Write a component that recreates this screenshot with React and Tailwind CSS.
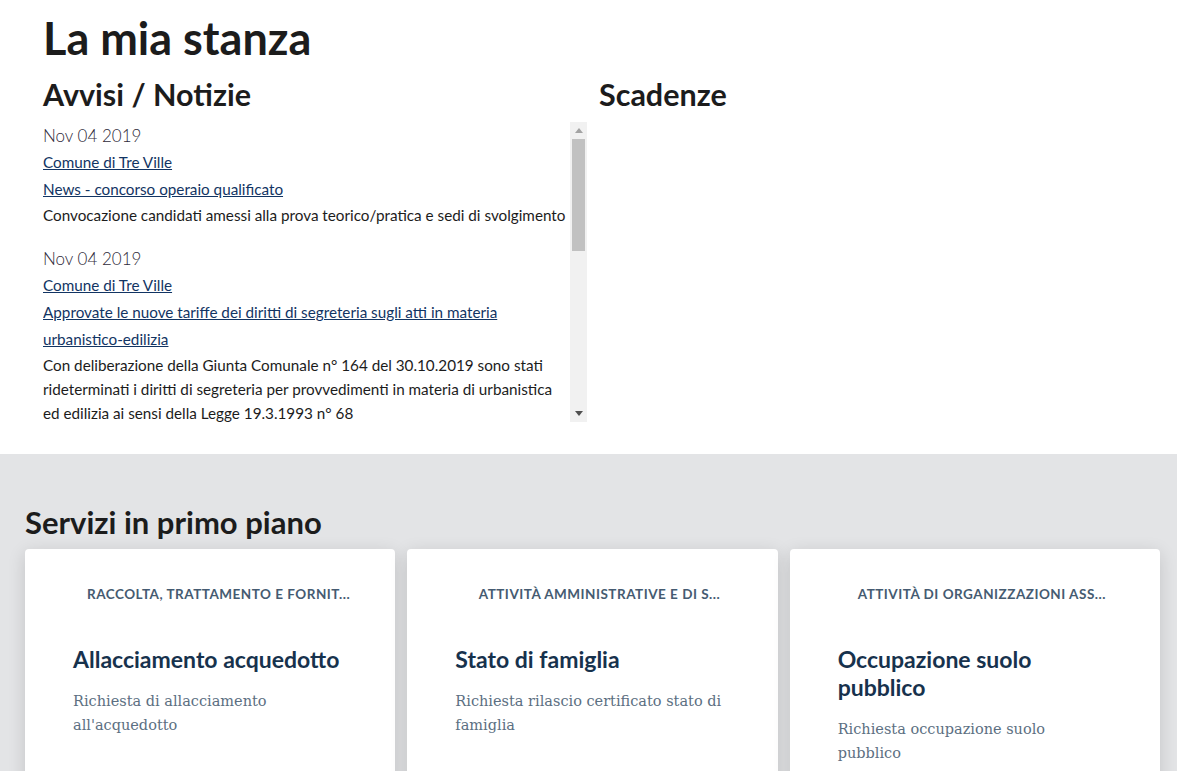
import React from 'react';

const sans = { fontFamily: 'Lato, "Noto Sans", sans-serif' };
const serif = { fontFamily: '"DejaVu Serif", "Liberation Serif", serif' };

const news = [
  {
    date: 'Nov 04 2019',
    source: 'Comune di Tre Ville',
    title: 'News - concorso operaio qualificato',
    text: 'Convocazione candidati amessi alla prova teorico/pratica e sedi di svolgimento',
  },
  {
    date: 'Nov 04 2019',
    source: 'Comune di Tre Ville',
    title: 'Approvate le nuove tariffe dei diritti di segreteria sugli atti in materia urbanistico-edilizia',
    text: 'Con deliberazione della Giunta Comunale n° 164 del 30.10.2019 sono stati rideterminati i diritti di segreteria per provvedimenti in materia di urbanistica ed edilizia ai sensi della Legge 19.3.1993 n° 68',
  },
];

const services = [
  {
    category: 'Raccolta, trattamento e fornit...',
    title: 'Allacciamento acquedotto',
    text: "Richiesta di allacciamento all'acquedotto",
  },
  {
    category: 'Attività amministrative e di s...',
    title: 'Stato di famiglia',
    text: 'Richiesta rilascio certificato stato di famiglia',
  },
  {
    category: 'Attività di organizzazioni ass...',
    title: 'Occupazione suolo pubblico',
    text: 'Richiesta occupazione suolo pubblico',
  },
];

const NewsItem = ({ item }) => (
  <div className="mb-[18px] text-[15.25px] leading-[27px]">
    <div className="text-[17px] font-light text-[#2f2b3a]">{item.date}</div>
    <div>
      <a href="#" className="text-[#123463] underline">{item.source}</a>
    </div>
    <div>
      <a href="#" className="text-[#123463] underline">{item.title}</a>
    </div>
    <p className="leading-[24px] text-[#1c1c1c]">{item.text}</p>
  </div>
);

// fake classic scrollbar, the page's own scrollbars are hidden in the capture
const ScrollBar = () => (
  <div className="flex w-[17px] shrink-0 flex-col bg-[#f1f1f1]">
    <div className="flex h-[17px] items-center justify-center">
      <svg width="8" height="5" viewBox="0 0 8 5">
        <path d="M0 5 L4 0 L8 5 Z" fill="#a3a3a3" />
      </svg>
    </div>
    <div className="mx-[2px] h-[112px] bg-[#c1c1c1]" />
    <div className="flex-1" />
    <div className="flex h-[17px] items-center justify-center">
      <svg width="8" height="5" viewBox="0 0 8 5">
        <path d="M0 0 L8 0 L4 5 Z" fill="#505050" />
      </svg>
    </div>
  </div>
);

const ServiceCard = ({ service }) => (
  <div className="h-[260px] rounded-[4px] bg-white px-[48px] pt-[35px] shadow-[0_4px_18px_rgba(0,0,0,0.14)]">
    <div className="whitespace-nowrap pl-[14px] text-center text-[13.5px] font-bold uppercase tracking-[0.5px] text-[#455b71]">
      {service.category}
    </div>
    <h3 className="mt-[41px] text-[23px] font-bold leading-[28px] text-[#17324d]">{service.title}</h3>
    <p className="mt-[16px] text-[14.5px] leading-[24px] text-[#5c6f82]" style={serif}>
      {service.text}
    </p>
  </div>
);

export default function App() {
  return (
    <div className="min-h-[771px] bg-white" style={sans}>
      <section className="pl-[43px] pt-[10px] pb-[32px]">
        <h1 className="text-[45px] font-bold leading-[56px] text-[#1c1c1c]">La mia stanza</h1>
        <div className="mt-[8px] grid w-[1100px] grid-cols-2 gap-[12px]">
          <div>
            <h2 className="text-[30.5px] font-bold leading-[40px] text-[#1c1c1c]">Avvisi / Notizie</h2>
            <div className="mt-[8px] flex h-[300px]">
              <div className="flex-1 overflow-hidden">
                {news.map((item, i) => (
                  <NewsItem key={i} item={item} />
                ))}
              </div>
              <ScrollBar />
            </div>
          </div>
          <div>
            <h2 className="text-[30.5px] font-bold leading-[40px] text-[#1c1c1c]">Scadenze</h2>
          </div>
        </div>
      </section>

      <section className="bg-[#e3e4e6] pt-[48px] pb-[20px]">
        <div className="ml-[25px] w-[1135px]">
          <h2 className="text-[31px] font-bold leading-[40px] text-[#1c1c1c]">Servizi in primo piano</h2>
          <div className="mt-[7px] grid grid-cols-3 gap-[12px]">
            {services.map((s, i) => (
              <ServiceCard key={i} service={s} />
            ))}
          </div>
        </div>
      </section>
    </div>
  );
}
